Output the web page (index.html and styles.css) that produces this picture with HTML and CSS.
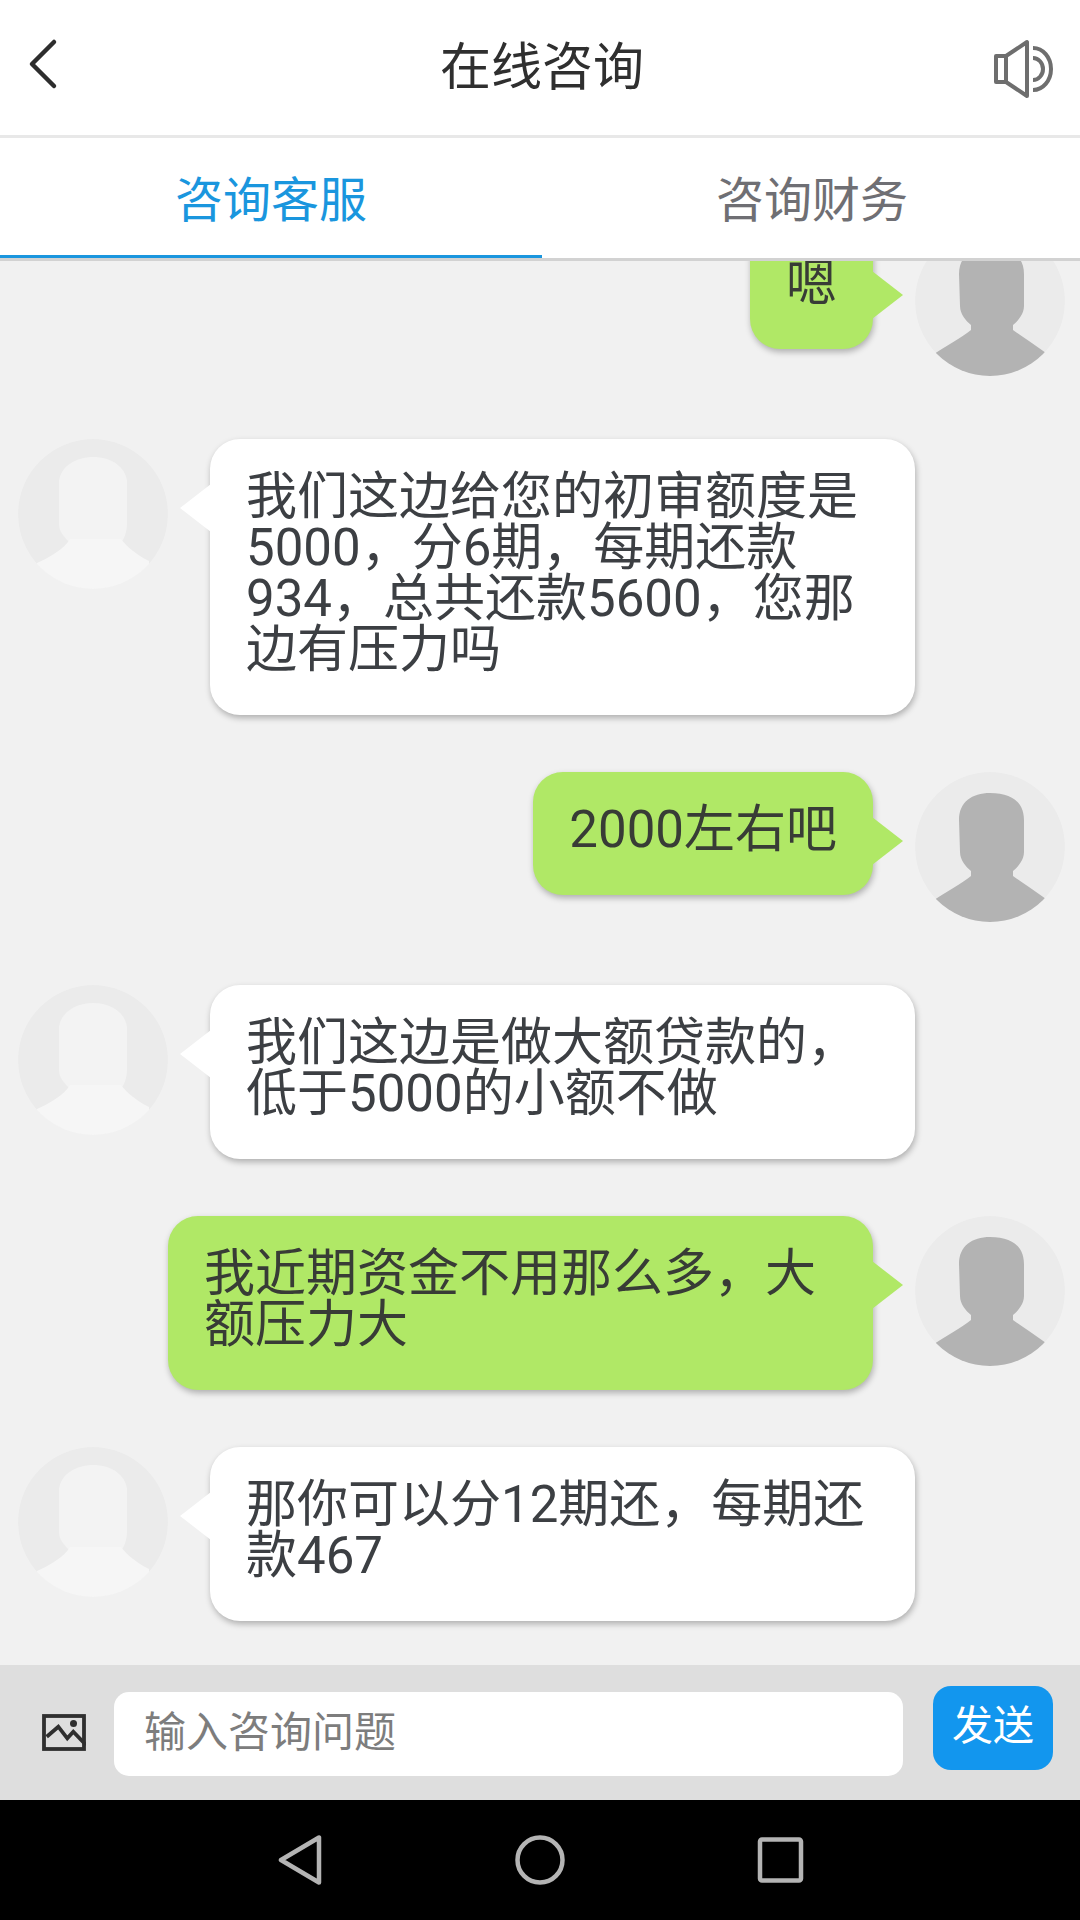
FILE: index.html
```html
<!DOCTYPE html>
<html lang="zh-CN">
<head>
<meta charset="utf-8">
<title>在线咨询</title>
<link rel="stylesheet" href="styles.css">
</head>
<body>
<svg class="defs" width="0" height="0" aria-hidden="true">
  <defs>
    <clipPath id="avatar-clip"><circle cx="75" cy="75" r="75"/></clipPath>
    <symbol id="avatar-user" viewBox="0 0 150 150">
      <g clip-path="url(#avatar-clip)">
        <circle class="avatar-bg" cx="75" cy="75" r="75"/>
        <path class="user-fg" d="M44 48C44 30 57 21 75 21C96 21 109 30 109 48V80C109 88 103 95 98 99V104C108 111 120 119 131 127V150H19V128C31 120 46 112 56 104V99C51 95 45 88 45 80Z"/>
      </g>
    </symbol>
    <symbol id="avatar-agent" viewBox="0 0 150 150">
      <g clip-path="url(#avatar-clip)">
        <circle class="avatar-bg" cx="75" cy="75" r="75"/>
        <path class="agent-head" d="M41 42C43 27 58 18 75 18C94 18 107 28 109 42V84C109 92 107 98 103 104H52C46 98 41 92 41 86Z"/>
        <path class="agent-body" d="M52 100H103C109 108 119 116 131 122V150H19V124C32 118 46 110 52 100Z"/>
      </g>
    </symbol>
  </defs>
</svg>
<div class="app">
  <header class="topbar">
    <svg class="back" viewBox="0 0 40 56"><path d="M30 6L8 28L30 50"/></svg>
    <h1 class="title">在线咨询</h1>
    <svg class="sound" viewBox="0 0 66 66"><path d="M6 20H16L37 6V60L16 46H6Z"/><path d="M16 20V46"/><path d="M43 22A10 11 0 0 1 43 44"/><path d="M43 12A18 21 0 0 1 43 54"/></svg>
  </header>
  <nav class="tabs">
    <div class="tab tab-active">咨询客服</div>
    <div class="tab">咨询财务</div>
  </nav>
  <main class="chat">
    <div class="row row-me">
      <div class="bubble bubble-me">嗯<span class="tail tail-me"></span></div>
      <svg class="avatar"><use href="#avatar-user"/></svg>
    </div>
    <div class="row">
      <svg class="avatar"><use href="#avatar-agent"/></svg>
      <div class="bubble bubble-them">我们这边给您的初审额度是5000，分6期，每期还款934，总共还款5600，您那边有压力吗<span class="tail tail-them"></span></div>
    </div>
    <div class="row row-me">
      <div class="bubble bubble-me">2000左右吧<span class="tail tail-me"></span></div>
      <svg class="avatar"><use href="#avatar-user"/></svg>
    </div>
    <div class="row">
      <svg class="avatar"><use href="#avatar-agent"/></svg>
      <div class="bubble bubble-them">我们这边是做大额贷款的，低于5000的小额不做<span class="tail tail-them"></span></div>
    </div>
    <div class="row row-me">
      <div class="bubble bubble-me">我近期资金不用那么多，大额压力大<span class="tail tail-me"></span></div>
      <svg class="avatar"><use href="#avatar-user"/></svg>
    </div>
    <div class="row">
      <svg class="avatar"><use href="#avatar-agent"/></svg>
      <div class="bubble bubble-them">那你可以分12期还，每期还款467<span class="tail tail-them"></span></div>
    </div>
  </main>
  <footer class="composer">
    <svg class="pic" viewBox="0 0 44 37"><rect x="2" y="2" width="40" height="33"/><path d="M4.700 22.700L16.300 12.700L25.300 24.300L31.300 17.700L44 31"/><circle cx="31.500" cy="9.500" r="3.500"/></svg>
    <div class="input">输入咨询问题</div>
    <div class="send">发送</div>
  </footer>
  <div class="sysnav">
    <svg class="nav-icon" viewBox="0 0 50 50"><path d="M44 2.500V47.500L6 25Z"/></svg>
    <svg class="nav-icon" viewBox="0 0 50 50"><circle cx="25" cy="25" r="22.500"/></svg>
    <svg class="nav-icon" viewBox="0 0 50 50"><rect x="5" y="4.500" width="41" height="41" rx="2"/></svg>
  </div>
</div>
</body>
</html>
```
FILE: styles.css
```css
* { box-sizing: border-box; }
html, body { margin: 0; padding: 0; }
body { font-family: Roboto, "Noto Sans CJK SC", sans-serif; background: #f1f1f1; }
.defs { display: block; height: 0; }
.app { width: 1080px; height: 1920px; display: flex; flex-direction: column; overflow: hidden; }

.topbar {
  height: 138px; flex: none; background: #fff; border-bottom: 3px solid #e8e8e8;
  display: grid; grid-template-columns: 1fr auto 1fr; align-items: center; padding: 0 24px 0 28px;
}
.back { width: 40px; height: 56px; margin: -8px 0 0 -4px; fill: none; stroke: #2d2d2d; stroke-width: 4.500; stroke-linecap: round; stroke-linejoin: round; }
.title { margin: 0; font-size: 51px; line-height: 60px; font-weight: 400; color: #2f2f2f; }
.sound { width: 66px; height: 66px; margin-top: 3px; justify-self: end; fill: none; stroke: #6e6e6e; stroke-width: 4; stroke-linejoin: round; }

.tabs { height: 123px; flex: none; display: flex; background: #fff; border-bottom: 3px solid #d2d2d2; }
.tab { flex: 1; display: flex; align-items: center; justify-content: center; padding: 0 0 5px 2px; font-size: 48px; color: #6f6f74; }
.tab-active { flex: none; width: 542px; padding: 0 0 2px; color: #1a96de; border-bottom: 3px solid #1a96de; }

.chat {
  flex: 1; min-height: 0; overflow: hidden; display: flex; flex-direction: column; justify-content: flex-end;
  gap: 57px; padding: 0 15px 44px 18px; background: #f1f1f1;
}
.row { display: flex; flex: none; align-items: flex-start; gap: 42px; }
.row-me { justify-content: flex-end; }
.avatar { width: 150px; height: 150px; flex: none; margin-bottom: 6px; filter: blur(.6px); }
.avatar-bg { fill: #ebebeb; }
.user-fg { fill: #b3b3b3; }
.agent-head { fill: #f3f3f3; }
.agent-body { fill: #f6f6f6; }

.bubble {
  position: relative; max-width: 705px; padding: 32px 36px 40px; border-radius: 30px;
  font-size: 51px; line-height: 51px; color: #3c3f43; box-shadow: 1px 3px 6px rgba(0, 0, 0, .28);
}
.bubble-me { background: #b0e866; color: #383c36; }
.bubble-them { background: #fff; width: 705px; }
.tail { position: absolute; top: 45px; width: 31px; height: 48px; }
.tail-me { left: 100%; margin-left: -1px; background: #b0e866; clip-path: polygon(0 0, 100% 50%, 0 100%); }
.tail-them { right: 100%; margin-right: -1px; background: #fff; clip-path: polygon(100% 0, 0 50%, 100% 100%); }

.composer {
  height: 135px; flex: none; background: #dedede; display: flex; align-items: flex-start; padding: 27px 27px 0 42px;
}
.pic { width: 44px; height: 37px; margin-top: 22px; flex: none; fill: none; stroke: #2f2f2f; stroke-width: 3.800; }
.pic circle { fill: #2f2f2f; stroke: none; }
.input {
  width: 789px; height: 84px; margin-left: 28px; background: #fff; border-radius: 15px; flex: none;
  display: flex; align-items: center; padding: 0 30px 12px; font-size: 42px; color: #7d7d7d;
}
.send {
  width: 120px; height: 84px; margin: -6px 0 0 30px; background: #1296ee; border-radius: 18px; flex: none;
  display: flex; align-items: center; justify-content: center; padding-bottom: 12px; font-size: 41px; color: #fff;
}

.sysnav { height: 120px; flex: none; background: #000; display: flex; align-items: center; justify-content: center; gap: 190px; }
.nav-icon { width: 50px; height: 50px; fill: none; stroke: #b4b4b4; stroke-width: 4.500; stroke-linejoin: round; }
```
